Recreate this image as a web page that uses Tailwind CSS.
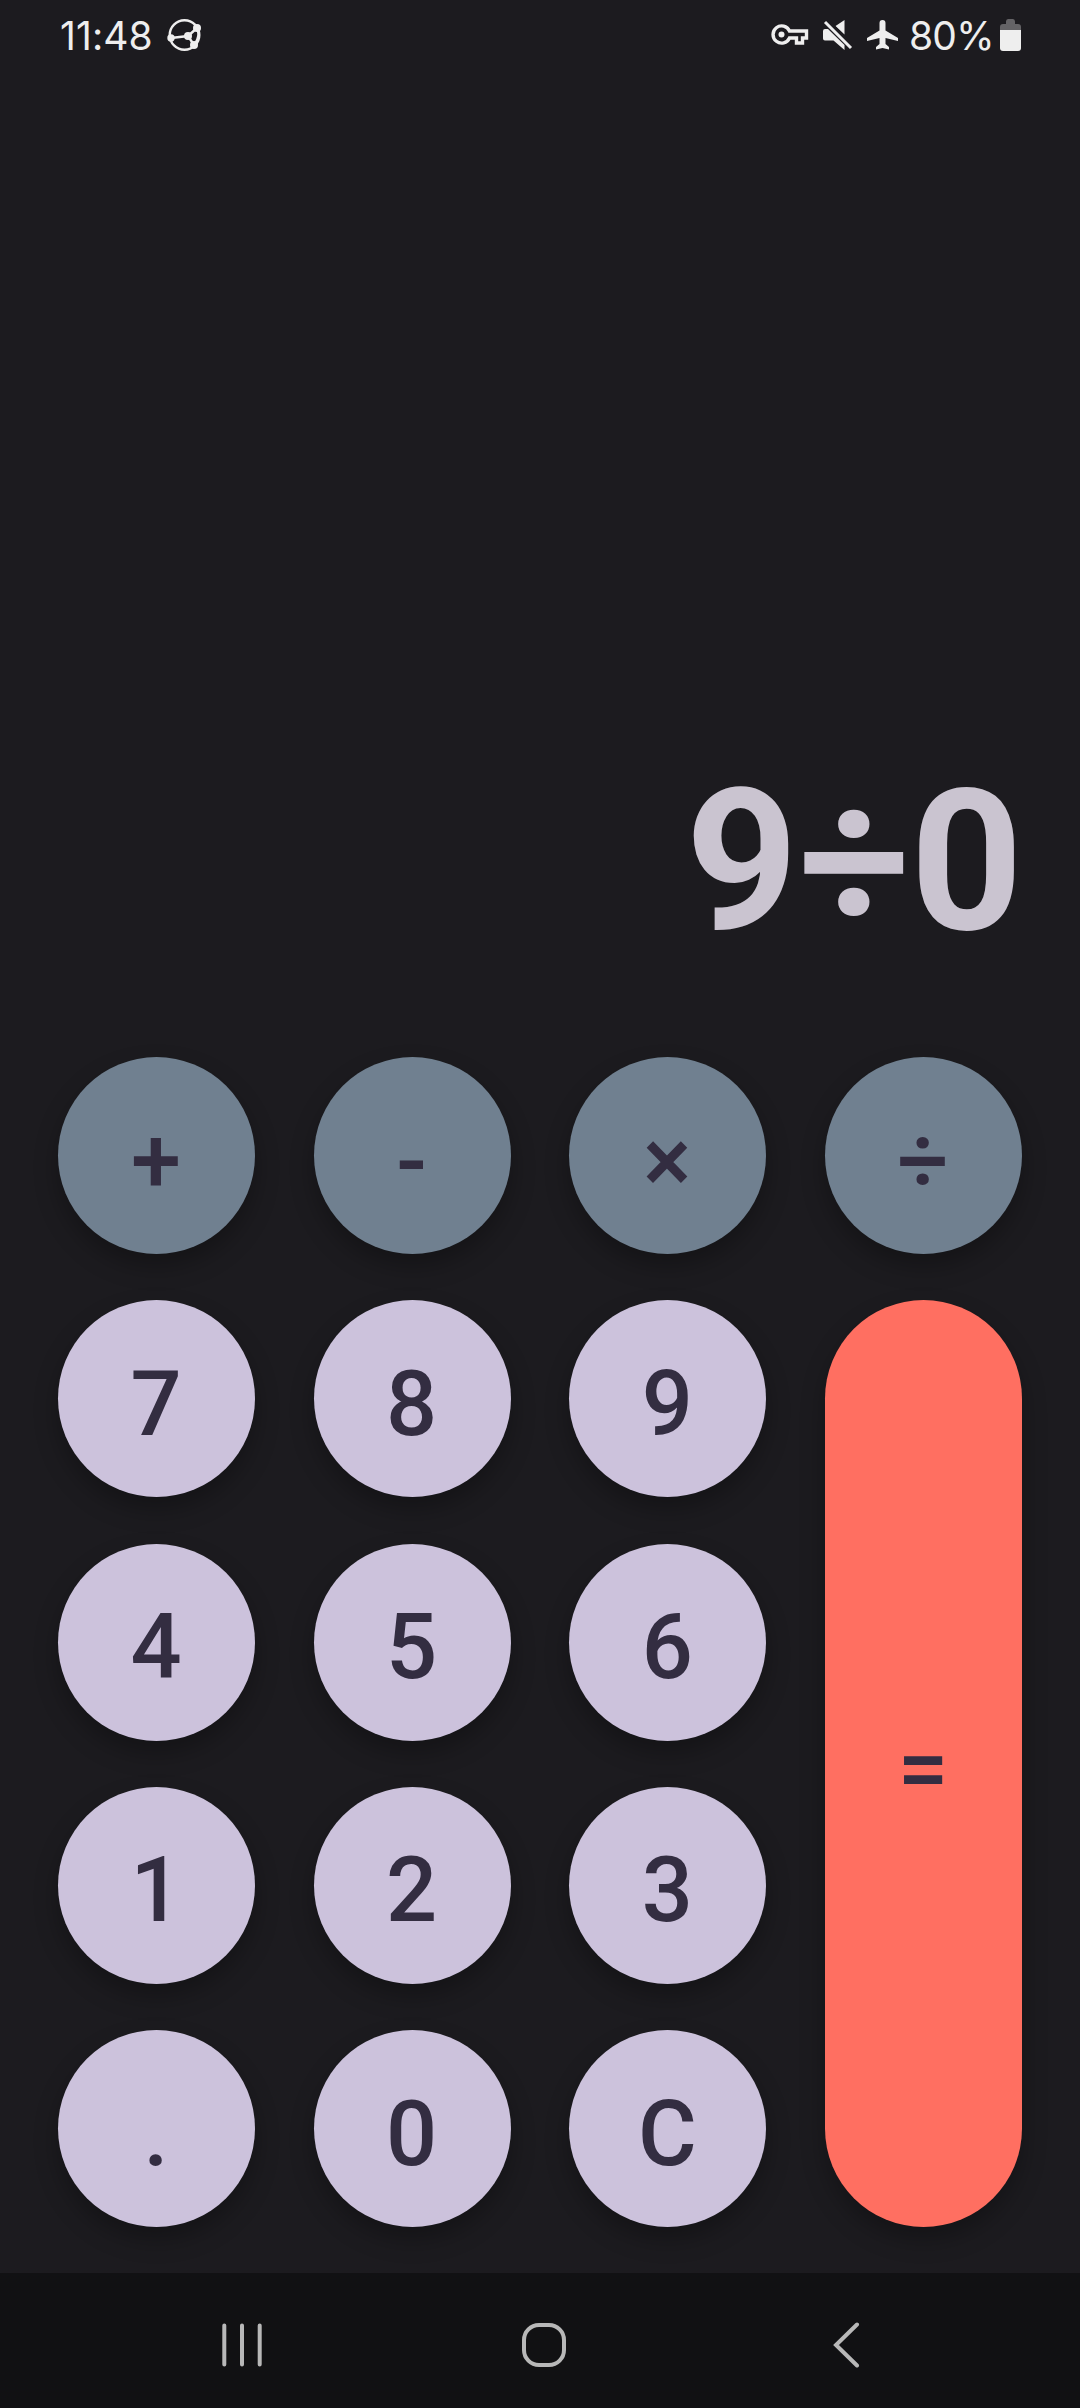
<!DOCTYPE html>
<html lang="en">
<head>
<meta charset="utf-8">
<title>Calculator</title>
<script src="https://cdn.jsdelivr.net/npm/@tailwindcss/browser@4"></script>
</head>
<body class="bg-[#1c1b1f]">
<div class="flex h-[2408px] w-[1080px] flex-col overflow-hidden bg-[#1c1b1f] font-['Roboto',sans-serif]">
  <header class="flex h-[70px] items-center justify-between pl-[60px] pr-[59px] font-['Inter',sans-serif] text-[39px] leading-none text-[#eee]">
    <div class="flex items-center gap-[15px]">
      <span class="w-[92px] whitespace-nowrap tracking-[0.1px]">11:48</span>
      <svg class="size-[34px]" viewBox="0 0 34 34" fill="none" stroke="#eee" stroke-width="2.4"><circle cx="17.5" cy="17" r="14.800"/><path d="M4 20 21 18 30 10M21 18 27 27M30 10Q34 18 27 27"/><g fill="#eee" stroke="none"><circle cx="4" cy="20" r="3.700"/><circle cx="21" cy="18" r="4"/><circle cx="30" cy="10" r="4"/><circle cx="27" cy="27" r="4"/></g></svg>
    </div>
    <div class="flex items-center">
      <svg class="mr-[14px] h-[22px] w-[38px]" viewBox="0 0 38 22" fill="none" stroke="#eee" stroke-width="3.4"><path d="M18.500 7H35.500V14H31.500V19H25.500V14H18.500A8.600 8.600 0 1 1 18.500 7Z"/><circle cx="10.500" cy="10.500" r="3" fill="#eee" stroke="none"/></svg>
      <svg class="mr-[14px] h-[30px] w-[30px]" viewBox="0 0 30 30" fill="#eee"><path d="M21.500 0V14.500L12.500 6ZM0 11Q0 9 2 9H5L21.500 25V30L10.500 20.500H2Q0 20.500 0 18.500Z"/><path d="M4 0 30 26" stroke="#1c1b1f" stroke-width="3"/><path d="M2 2 28 28" stroke="#eee" stroke-width="3"/></svg>
      <svg class="mr-[11px] h-[30px] w-[31px]" viewBox="0 0 31 30" fill="#eee"><path d="M12.500 3Q12.500 0 15.500 0T18.500 3V10.500L31 18V21L18.500 18V24L22 27V29.500L15.500 28 9 29.500V27L12.500 24V18L0 21V18L12.500 10.500Z"/></svg>
      <span class="mr-[8px] w-[83px] whitespace-nowrap tracking-[-0.8px]">80%</span>
      <svg class="h-[32px] w-[21px]" viewBox="0 0 21 32"><path d="M0 11V8Q0 5 3 5H6V2.500Q6 0 8 0H13Q15 0 15 2.500V5H18Q21 5 21 8V11Z" fill="#646366"/><path d="M0 11H21V29Q21 32 18 32H3Q0 32 0 29Z" fill="#eee"/></svg>
    </div>
  </header>

  <main class="flex flex-1 flex-col justify-end px-[58px] pb-[46px]">
    <div class="-mr-px mb-[97px] text-right text-[196.500px] font-bold leading-none text-[#cac4d0]">9÷0</div>
    <div class="grid h-[1170px] grid-cols-[repeat(4,197px)] grid-rows-[repeat(5,197px)] content-between justify-between text-[90px] font-medium leading-none text-[#332d41] *:flex *:items-center *:justify-center *:rounded-full *:pt-[12px] *:pr-px *:shadow-[0_12px_24px_rgba(0,0,0,0.28)]">
      <button class="bg-[#708090]">+</button>
      <button class="bg-[#708090]">-</button>
      <button class="bg-[#708090]">×</button>
      <button class="bg-[#708090]">÷</button>
      <button class="bg-[#ccc2dc]">7</button>
      <button class="bg-[#ccc2dc]">8</button>
      <button class="bg-[#ccc2dc]">9</button>
      <button class="row-span-4 bg-[#ff6f61]">=</button>
      <button class="bg-[#ccc2dc]">4</button>
      <button class="bg-[#ccc2dc]">5</button>
      <button class="bg-[#ccc2dc]">6</button>
      <button class="bg-[#ccc2dc]">1</button>
      <button class="bg-[#ccc2dc]">2</button>
      <button class="bg-[#ccc2dc]">3</button>
      <button class="bg-[#ccc2dc]">.</button>
      <button class="bg-[#ccc2dc]">0</button>
      <button class="bg-[#ccc2dc]">C</button>
    </div>
  </main>

  <nav class="flex h-[135px] items-center justify-between bg-[#111113] pl-[220px] pr-[216px] pt-[9px]">
    <svg class="size-[44px]" viewBox="0 0 44 44" stroke="#b8b8b8" stroke-width="4" stroke-linecap="round"><path d="M4.300 2.500V41.500M22 2.500V41.500M39.700 2.500V41.500"/></svg>
    <svg class="size-[44px]" viewBox="0 0 44 44" fill="none" stroke="#b8b8b8" stroke-width="4"><rect x="2" y="2" width="40" height="40" rx="15"/></svg>
    <svg class="h-[46px] w-[40px]" viewBox="0 0 40 46" fill="none" stroke="#b8b8b8" stroke-width="4" stroke-linecap="round"><path d="M33 2.500 12 23 33 43.500"/></svg>
  </nav>
</div>
</body>
</html>
